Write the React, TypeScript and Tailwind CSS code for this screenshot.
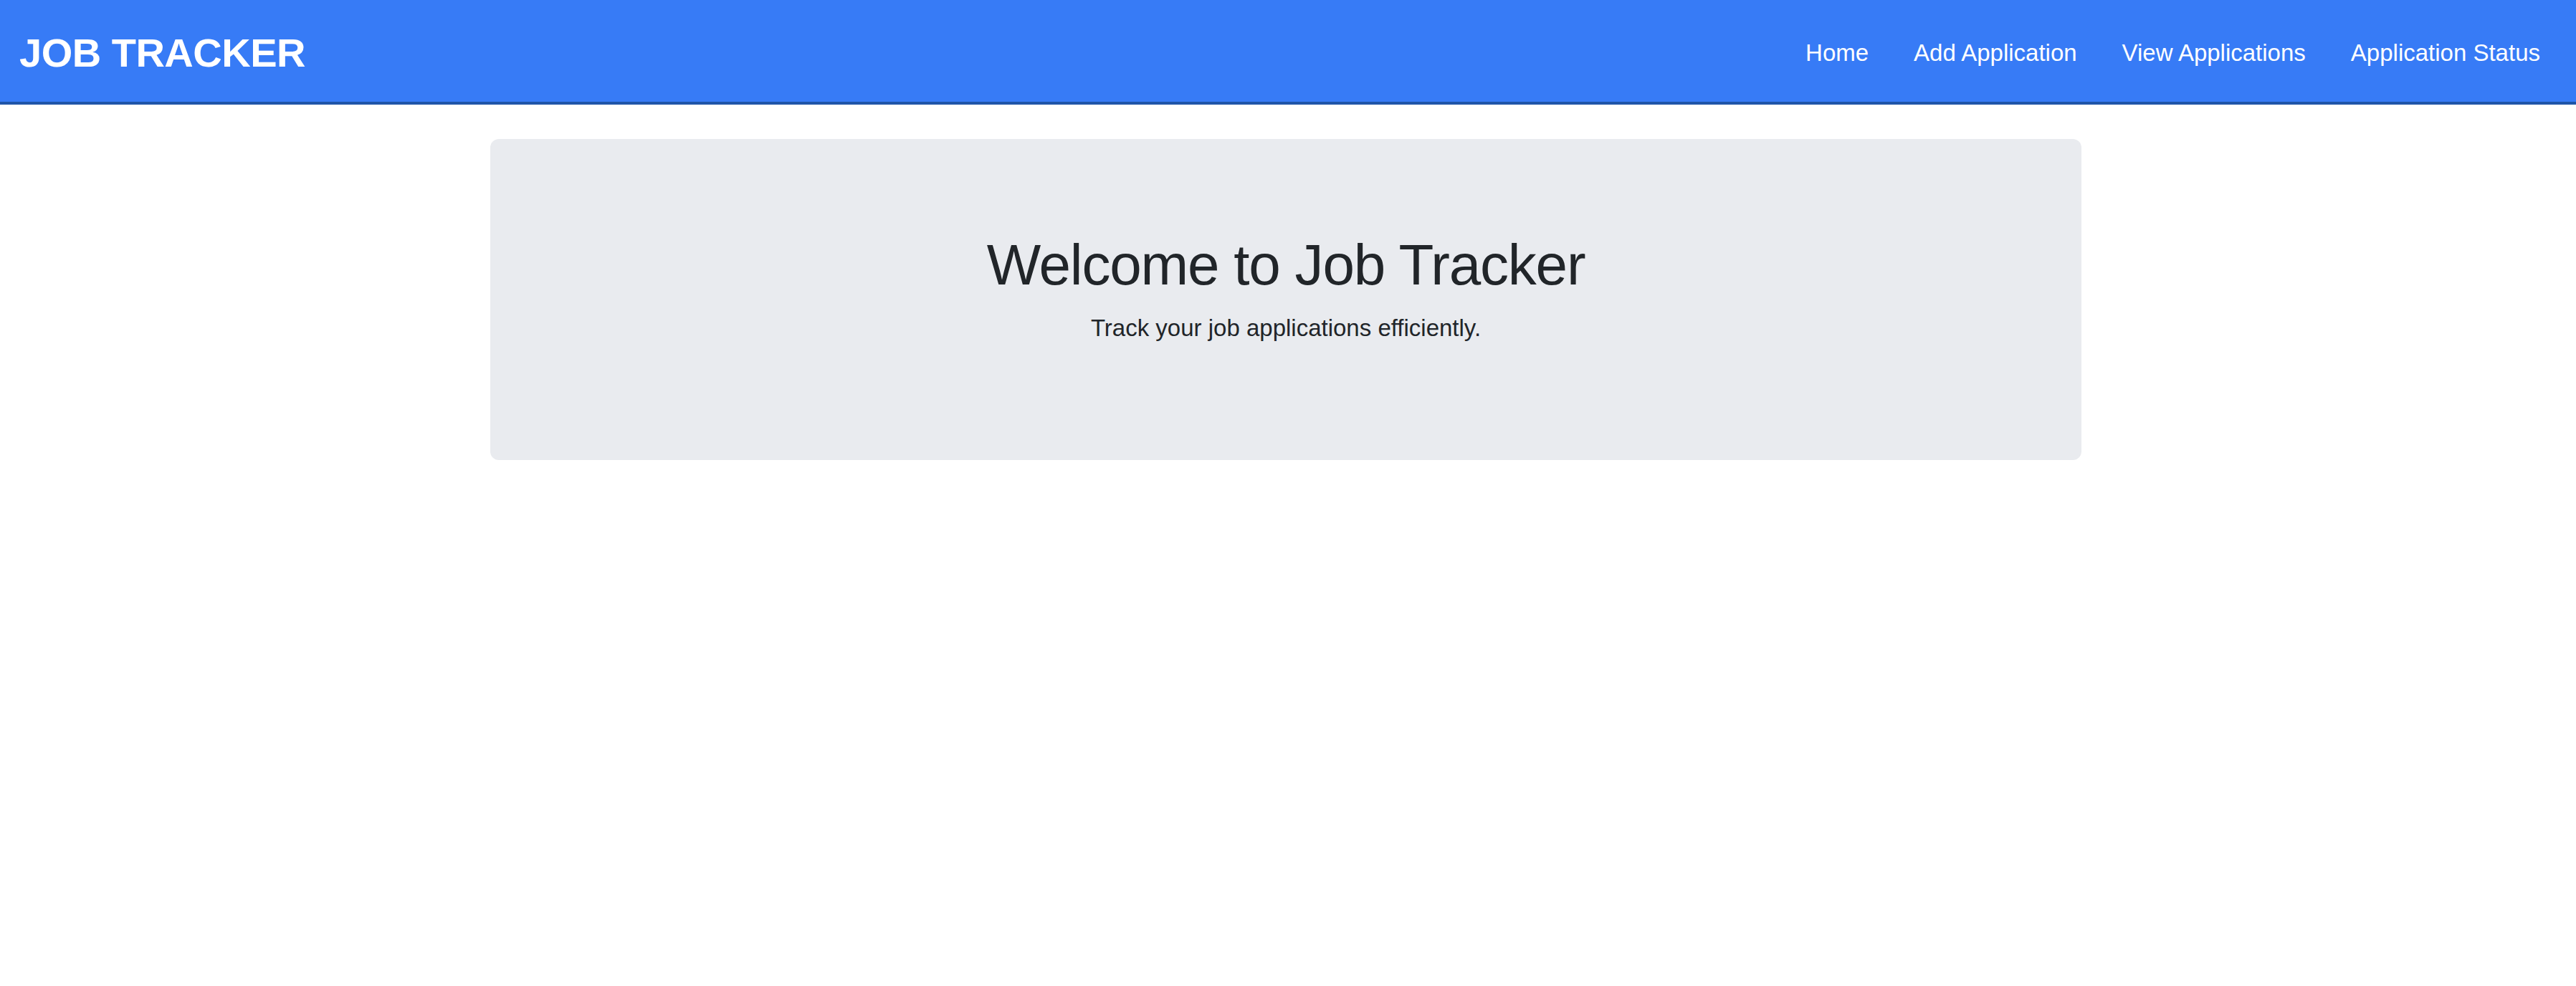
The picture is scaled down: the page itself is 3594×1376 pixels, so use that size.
export default function App() {
  const links = ["Home", "Add Application", "View Applications", "Application Status"];

  return (
    <div className="min-h-screen bg-white font-['Liberation_Sans',Arial,sans-serif]">
      <nav className="flex h-[146px] items-center justify-between border-b-4 border-[#1f55a8] bg-[#377bf6] pt-[5px] pl-[27px] pr-[50px]">
        <span className="text-[56px] font-bold tracking-[-0.5px] text-white leading-none">
          JOB TRACKER
        </span>
        <ul className="flex items-center gap-[63px]">
          {links.map((l) => (
            <li key={l} className="text-[33px] text-white leading-none">
              {l}
            </li>
          ))}
        </ul>
      </nav>

      <main className="flex justify-center pt-[48px] pr-[6px]">
        <div className="w-[2220px] rounded-[12px] bg-[#e9ebef] px-[64px] py-[128px] text-center text-[#212529]">
          <h1 className="mb-4 text-[80px] leading-[96px] font-medium tracking-[-1.2px]">
            Welcome to Job Tracker
          </h1>
          <p className="mb-8 text-[33px] leading-[48px]">
            Track your job applications efficiently.
          </p>
        </div>
      </main>
    </div>
  );
}
